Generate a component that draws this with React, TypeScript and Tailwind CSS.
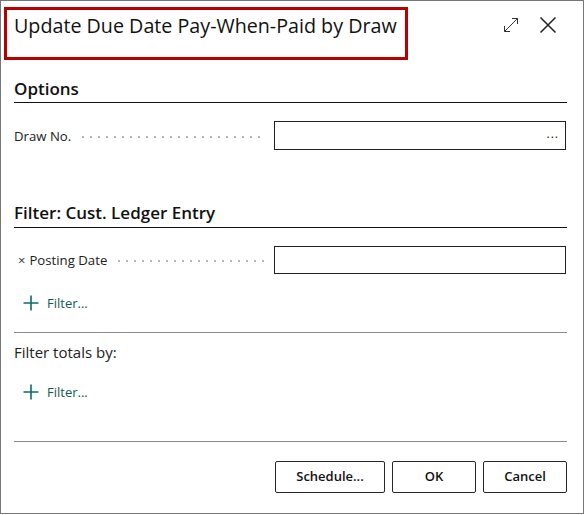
import React from "react";

const TEAL = "#0e6b68";

// Dotted leader between a field caption and its input
const Leader: React.FC = () => (
  <span className="flex-1 self-center h-[2px] mt-[2px] ml-[8px] bg-[radial-gradient(circle,#b4b4b4_0.9px,transparent_1px)] bg-[length:8px_2px] bg-repeat-x" />
);

const FieldRow: React.FC<{ label: React.ReactNode; height: string; lookup?: boolean }> = ({ label, height, lookup }) => (
  <div className="flex items-center">
    <div className="w-[251px] flex items-center text-[13.2px] text-[#212121] leading-[18px]">
      {label}
      <Leader />
    </div>
    <div
      className={`ml-[9px] w-[292px] ${height} border border-[#212121] flex items-center justify-end pr-[6px]`}
    >
      {lookup && <span className="text-[12px] leading-none text-[#212121] tracking-[1px] -mt-[4px]">...</span>}
    </div>
  </div>
);

const AddFilter: React.FC = () => (
  <button className="flex items-center h-[20px] pl-[9px] text-[13px] leading-[20px]" style={{ color: "#125a57" }}>
    <svg width="16" height="16" viewBox="0 0 16 16" className="mr-[8px]">
      <path d="M8 0.5v15M0.5 8h15" stroke={TEAL} strokeWidth="1.6" fill="none" />
    </svg>
    Filter...
  </button>
);

const DialogButton: React.FC<{ label: string; width: string }> = ({ label, width }) => (
  <button
    className={`${width} h-[32px] border border-[#262626] rounded-[2px] bg-white text-[13px] font-semibold text-[#111]`}
  >
    {label}
  </button>
);

export default function App() {
  return (
    <div className="w-[585px] h-[515px] bg-white font-['Segoe_UI','Open_Sans',sans-serif] text-[#212121]">
      <div className="relative w-[584px] h-[514px] border border-[#777] flex flex-col">
        {/* header */}
        <div className="relative h-[78px] flex items-start pt-[13px] pl-[13px] pr-[26px]">
          <h1 className="text-[19.7px] leading-[24px] text-[#111] flex-1">Update Due Date Pay-When-Paid by Draw</h1>
          <div className="flex items-center gap-[20px] pt-[2px]">
            <svg width="16" height="16" viewBox="0 0 16 16">
              <path
                d="M1.5 14.5L14.5 1.5M9 1.5h5.5V7M1.5 9v5.5H7"
                stroke="#333"
                strokeWidth="1"
                fill="none"
              />
            </svg>
            <svg width="18" height="18" viewBox="0 0 18 18">
              <path d="M1.5 1.5l15 15M16.5 1.5l-15 15" stroke="#222" strokeWidth="1.5" fill="none" />
            </svg>
          </div>
          {/* highlight box */}
          <div className="absolute left-[3px] top-[6px] w-[404px] h-[53px] border-[3px] border-[#b80000]" />
        </div>

        <div className="pl-[13px] w-[566px] flex flex-col">
          <div className="h-[24px] border-b border-[#111]">
            <h2 className="text-[17px] font-semibold leading-[20px] text-[#111]">Options</h2>
          </div>

          <div className="mt-[18px]">
            <FieldRow label="Draw No." height="h-[29px]" lookup />
          </div>

          <div className="mt-[53px] h-[25px] border-b border-[#111]">
            <h2 className="text-[17px] font-semibold leading-[20px] text-[#111]">Filter: Cust. Ledger Entry</h2>
          </div>

          <div className="mt-[18px]">
            <FieldRow
              label={
                <>
                  <span className="ml-[4px] mr-[4px] text-[13px] text-[#333]">×</span>Posting Date
                </>
              }
              height="h-[28px]"
            />
          </div>

          <div className="mt-[19px]">
            <AddFilter />
          </div>

          <div className="mt-[19px] h-px bg-[#8a8a8a]" />

          <div className="mt-[9px] text-[15px] leading-[20px] text-[#212121]">Filter totals by:</div>

          <div className="mt-[20px]">
            <AddFilter />
          </div>

          <div className="mt-[39px] h-px bg-[#8a8a8a]" />

          <div className="mt-[19px] flex justify-end gap-[7px]">
            <DialogButton label="Schedule..." width="w-[110px]" />
            <DialogButton label="OK" width="w-[84px]" />
            <DialogButton label="Cancel" width="w-[84px]" />
          </div>
        </div>
      </div>
    </div>
  );
}
